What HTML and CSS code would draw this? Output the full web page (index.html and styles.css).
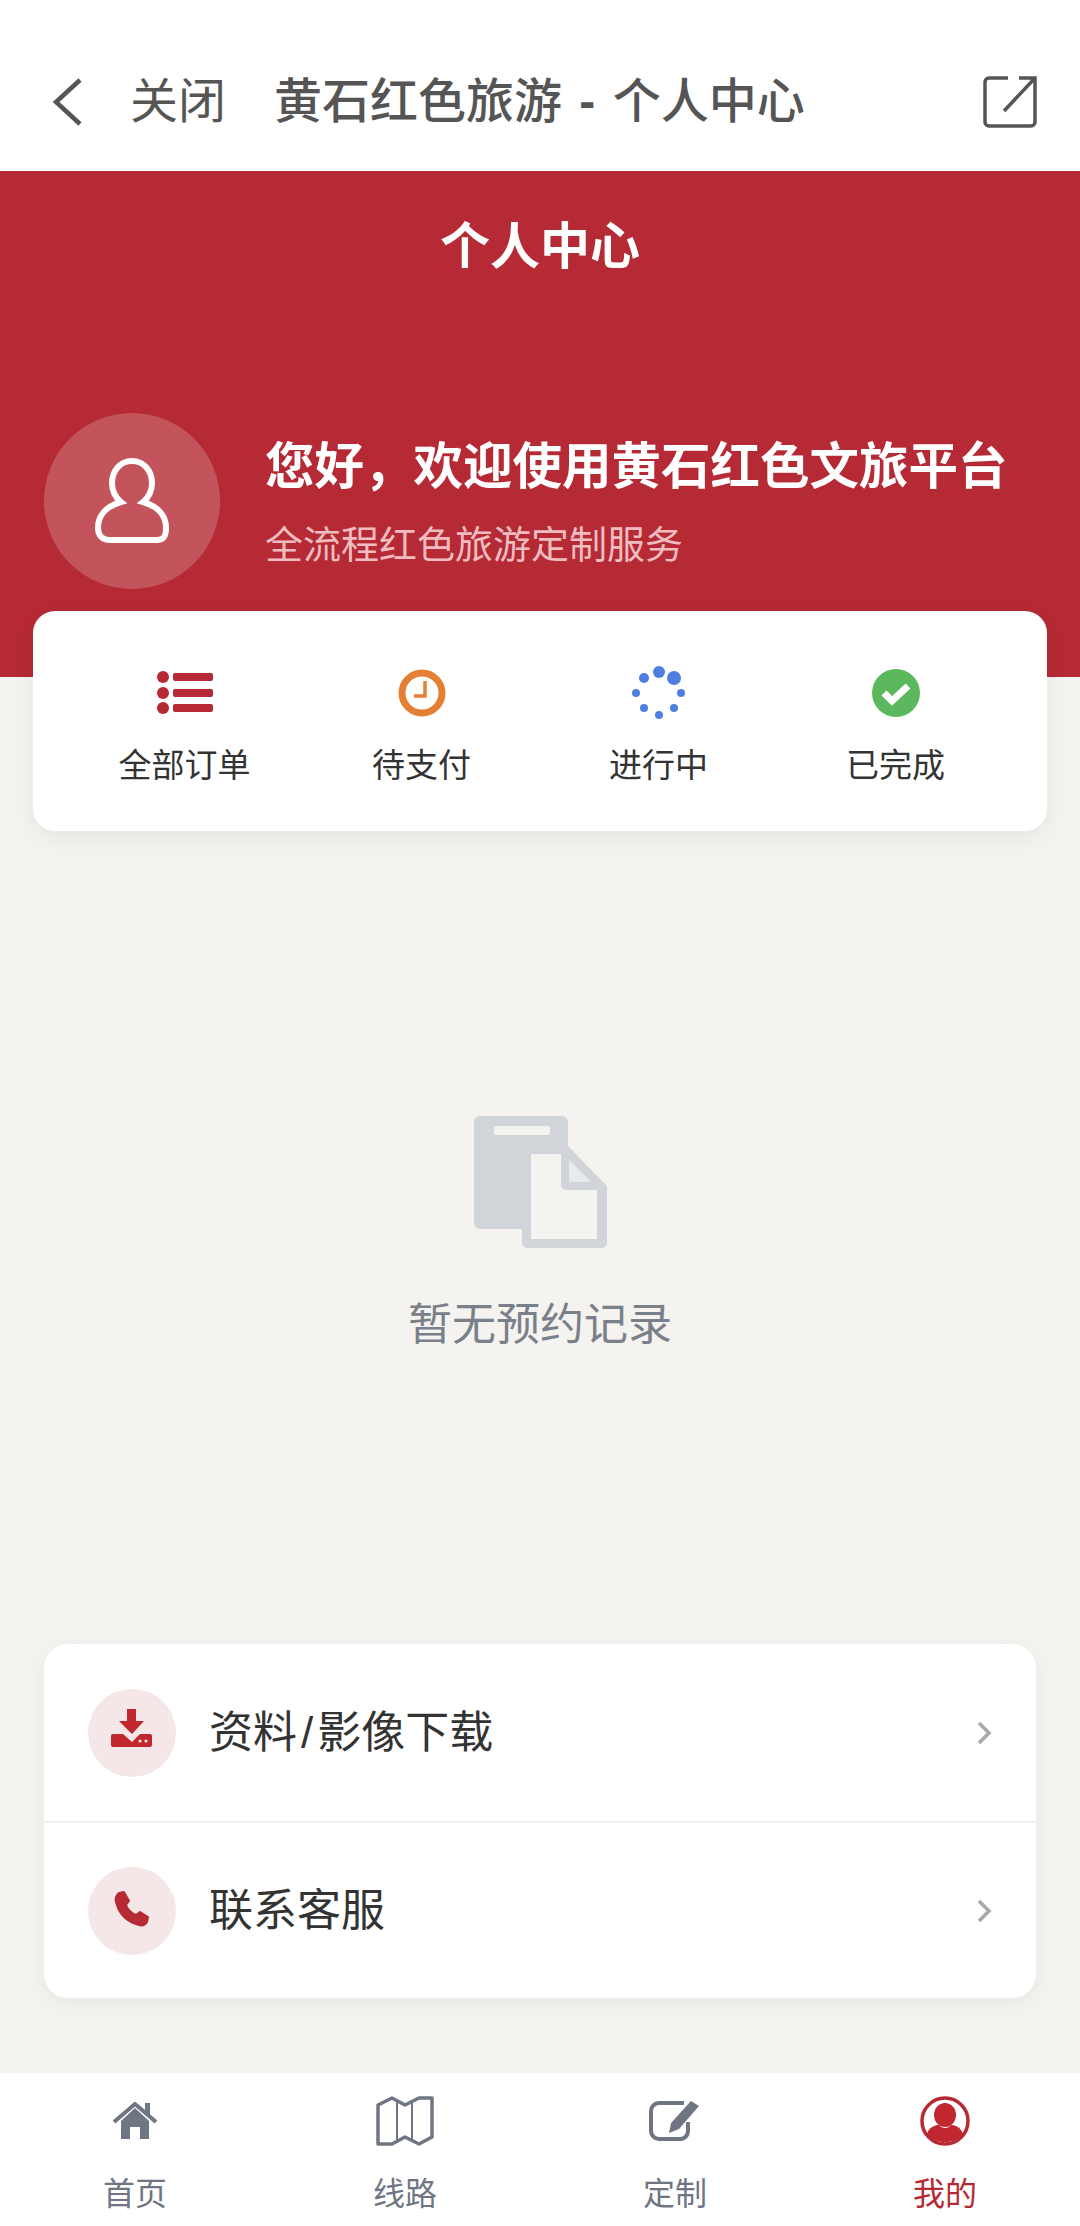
FILE: index.html
```html
<!DOCTYPE html>
<html lang="zh-CN">
<head>
  <meta charset="UTF-8" />
  <meta name="viewport" content="width=device-width, initial-scale=1.0" />
  <title>黄石红色旅游 - 个人中心</title>
  <link rel="stylesheet" href="styles.css">
</head>
<body>
  <div class="page">
    <header class="topbar">
      <svg class="back-icon" width="32" height="48" viewBox="0 0 32 48"><path d="M29 2 L5 24 L29 46" /></svg>
      <span class="close-text">关闭</span>
      <span class="top-title">黄石红色旅游 <b class="dash">-</b> 个人中心</span>
      <svg class="open-icon" width="56" height="54" viewBox="0 0 56 54"><path d="M26 3 H7 a4 4 0 0 0 -4 4 V47 a4 4 0 0 0 4 4 H49 a4 4 0 0 0 4 -4 V3 H37 M53 3 L22 36" /></svg>
    </header>

    <section class="hero">
      <h1 class="hero-title">个人中心</h1>
      <div class="user-row">
        <div class="avatar">
          <svg width="74" height="86" viewBox="0 0 74 86"><path d="M37 3 c-12 0 -20 10 -20 22 c0 8 4 15 9 19 c-14 4 -23 13 -23 26 c0 8 5 12 12 12 H62 c7 0 9 -4 9 -12 c0 -13 -9 -22 -23 -26 c5 -4 9 -11 9 -19 c0 -12 -8 -22 -20 -22 z" /></svg>
        </div>
        <div class="user-text">
          <div class="hello">您好&#xFF0C;欢迎使用黄石红色文旅平台</div>
          <div class="hello-sub">全流程红色旅游定制服务</div>
        </div>
      </div>
    </section>

    <main class="content">
      <nav class="orders">
        <div class="order-item">
          <svg width="56" height="56" viewBox="0 0 56 56">
            <g fill="#b52a34">
              <circle cx="6" cy="12" r="6" /><circle cx="6" cy="28" r="6" /><circle cx="6" cy="43" r="6" />
              <rect x="16" y="8" width="40" height="8" rx="2" /><rect x="16" y="24" width="40" height="8" rx="2" /><rect x="16" y="39" width="40" height="8" rx="2" />
            </g>
          </svg>
          <span>全部订单</span>
        </div>
        <div class="order-item">
          <svg width="48" height="56" viewBox="0 0 48 56">
            <circle cx="24" cy="28" r="20" fill="none" stroke="#e47f33" stroke-width="7" />
            <path d="M27 16 V31 H16" fill="none" stroke="#e47f33" stroke-width="3.5" />
          </svg>
          <span>待支付</span>
        </div>
        <div class="order-item">
          <svg width="56" height="56" viewBox="0 0 56 56">
            <g fill="#4e7fe0">
              <circle cx="28" cy="7" r="6" /><circle cx="43" cy="13" r="7" /><circle cx="13" cy="13" r="5" />
              <circle cx="5" cy="28" r="4" /><circle cx="50" cy="28" r="4" />
              <circle cx="13" cy="43" r="4" /><circle cx="43" cy="43" r="4" /><circle cx="28" cy="50" r="4" />
            </g>
          </svg>
          <span>进行中</span>
        </div>
        <div class="order-item">
          <svg width="48" height="56" viewBox="0 0 48 56">
            <circle cx="24" cy="28" r="24" fill="#5cb85c" />
            <path d="M12 28 L20 36 L36 21" fill="none" stroke="#fff" stroke-width="7" />
          </svg>
          <span>已完成</span>
        </div>
      </nav>

      <div class="empty">
        <svg width="133" height="133" viewBox="0 0 133 133">
          <path fill="#d1d4d9" d="M6 0 H88 a6 6 0 0 1 6 6 V30 L133 70 V127 a5 5 0 0 1 -5 5 H53 a5 5 0 0 1 -5 -5 V113 H6 a6 6 0 0 1 -6 -6 V6 a6 6 0 0 1 6 -6 z" />
          <path fill="#f4f3ef" d="M57 38 H87 V69 a5 5 0 0 0 5 5 H123 V123 H57 z" />
          <path fill="#e8eaed" d="M95 44 L117 66 H95 z" />
          <rect x="20" y="10" width="56" height="9" rx="2" fill="#f4f3ef" />
        </svg>
        <p class="empty-text">暂无预约记录</p>
      </div>

      <div class="menu">
        <div class="menu-row">
          <div class="menu-badge">
            <svg width="88" height="88" viewBox="0 0 88 88">
              <path fill="#c0272f" d="M39 20 H48 V32 H56 L44 45 L31 32 H39 z" />
              <path fill="#c0272f" d="M25 45 H35 L44 53 L52 45 H62 a2 2 0 0 1 2 2 V56 a2 2 0 0 1 -2 2 H25 a2 2 0 0 1 -2 -2 V47 a2 2 0 0 1 2 -2 z" />
              <circle cx="52" cy="52" r="1.6" fill="#f5e6e6" /><circle cx="58" cy="52" r="1.6" fill="#f5e6e6" />
            </svg>
          </div>
          <span class="menu-text">资料<span class="slash">/</span>影像下载</span>
          <svg class="chevron" width="16" height="26" viewBox="0 0 16 26"><path d="M3 3 L13 13 L3 23" /></svg>
        </div>
        <div class="menu-row">
          <div class="menu-badge">
            <svg width="88" height="88" viewBox="0 0 88 88">
              <path fill="#b52a34" stroke="#b52a34" stroke-width="2" stroke-linejoin="round" d="M31 26 l5 -1 l5 9 l-3 4 c2 5 5 8 10 10 l4 -3 l8 5 l-1 5 c-2 3 -5 4 -8 3 c-12 -3 -20 -11 -23 -23 c-1 -3 0 -7 3 -9 z" />
            </svg>
          </div>
          <span class="menu-text">联系客服</span>
          <svg class="chevron" width="16" height="26" viewBox="0 0 16 26"><path d="M3 3 L13 13 L3 23" /></svg>
        </div>
      </div>
    </main>

    <footer class="tabbar">
      <div class="tab">
        <div class="tab-icon">
          <svg width="46" height="38" viewBox="0 0 46 38">
            <path fill="#6f7583" d="M9 19 L23 6 L37 19 V37 H28 V25 H18 V37 H9 z" />
            <path fill="none" stroke="#6f7583" stroke-width="4" d="M2 20 L23 2 L44 20" />
            <rect x="33" y="1" width="5" height="12" fill="#6f7583" />
          </svg>
        </div>
        <span>首页</span>
      </div>
      <div class="tab">
        <div class="tab-icon">
          <svg width="58" height="50" viewBox="0 0 58 50">
            <path fill="none" stroke="#6f7583" stroke-width="3.5" stroke-linejoin="round" d="M2 9 L16 2 L29 9 L43 2 L56 2 V41 L43 48 L29 41 L16 48 L2 48 z" />
            <path fill="none" stroke="#6f7583" stroke-width="2" d="M21 6 V44 M36 6 V44" />
          </svg>
        </div>
        <span>线路</span>
      </div>
      <div class="tab">
        <div class="tab-icon">
          <svg width="52" height="42" viewBox="0 0 52 42">
            <path fill="none" stroke="#6f7583" stroke-width="4" d="M35 3 H10 a8 8 0 0 0 -8 8 V31 a8 8 0 0 0 8 8 H32 a8 8 0 0 0 7 -8 V22" />
            <path fill="#6f7583" d="M42 1 L50 6 L30 29 L20 33 L22 23 z" />
          </svg>
        </div>
        <span>定制</span>
      </div>
      <div class="tab tab-active">
        <div class="tab-icon">
          <svg width="50" height="50" viewBox="0 0 50 50">
            <circle cx="25" cy="25" r="23" fill="none" stroke="#b52a34" stroke-width="3.5" />
            <ellipse cx="25" cy="19" rx="11" ry="12" fill="#c0272f" />
            <path fill="#c0272f" d="M7 38 C9 31 15 29 19 29 C22 33 28 33 31 29 C35 29 41 31 43 38 C38 44 32 46 25 46 C18 46 12 44 7 38 z" />
          </svg>
        </div>
        <span>我的</span>
      </div>
    </footer>
  </div>
</body>
</html>
```

FILE: styles.css
```css
* {
  box-sizing: border-box;
}
body {
  margin: 0;
  font-family: "Liberation Sans", "Noto Sans CJK SC", sans-serif;
  background: #f4f3ef;
}
.page {
  display: flex;
  flex-direction: column;
  height: 2226px;
}
.topbar {
  display: flex;
  align-items: center;
  height: 171px;
  padding: 33px 42px 0 51px;
  background: #fff;
  color: #555;
}
.back-icon path,
.open-icon path {
  fill: none;
  stroke: #555;
  stroke-width: 4.5;
}
.open-icon path {
  stroke-width: 3.5;
}
.close-text {
  margin-left: 47px;
  font-size: 48px;
  line-height: 60px;
}
.top-title {
  flex: 1;
  margin-left: 48px;
  font-size: 48px;
  line-height: 60px;
  font-weight: 500;
}
.dash {
  margin: 0 4px;
}
.hero {
  height: 506px;
  padding-top: 46px;
  background: #b52a34;
  color: #fff;
}
.hero-title {
  margin: 0;
  text-align: center;
  font-size: 50px;
  line-height: 60px;
  font-weight: 700;
}
.user-row {
  display: flex;
  align-items: center;
  gap: 45px;
  margin-top: 136px;
  padding-left: 44px;
}
.avatar {
  display: flex;
  align-items: center;
  justify-content: center;
  width: 176px;
  height: 176px;
  border-radius: 50%;
  background: rgba(255, 255, 255, 0.2);
}
.avatar path {
  fill: none;
  stroke: #fff;
  stroke-width: 6;
}
.user-text {
  padding-top: 4px;
}
.hello {
  font-size: 49.5px;
  line-height: 60px;
  font-weight: 700;
  white-space: nowrap;
}
.hello-sub {
  margin-top: 23px;
  font-size: 38px;
  line-height: 50px;
  color: #f0bcc0;
}
.content {
  flex: 1;
  display: flex;
  flex-direction: column;
}
.orders {
  display: grid;
  grid-template-columns: repeat(4, 1fr);
  height: 220px;
  margin: -66px 33px 0;
  padding: 54px 33px 0;
  border-radius: 22px;
  background: #fff;
  box-shadow: 0 8px 24px rgba(0, 0, 0, 0.06);
}
.order-item {
  display: flex;
  flex-direction: column;
  align-items: center;
  font-size: 33px;
  line-height: 44px;
  color: #333;
}
.order-item svg {
  margin-bottom: 23px;
}
.empty {
  display: flex;
  flex-direction: column;
  align-items: center;
  padding-top: 285px;
}
.empty-text {
  margin: 46px 0 0;
  font-size: 44px;
  line-height: 60px;
  color: #7a808a;
}
.menu {
  margin: auto 44px 75px;
  border-radius: 24px;
  background: #fff;
  box-shadow: 0 6px 24px rgba(0, 0, 0, 0.05);
}
.menu-row {
  display: flex;
  align-items: center;
  height: 177px;
  padding: 0 44px;
}
.menu-row + .menu-row {
  border-top: 2px solid #f1f1f0;
}
.menu-badge {
  width: 88px;
  height: 88px;
  border-radius: 50%;
  background: #f5e6e7;
}
.menu-text {
  flex: 1;
  margin-left: 33px;
  font-size: 44px;
  line-height: 60px;
  color: #333;
}
.slash {
  margin: 0 4px;
}
.chevron path {
  fill: none;
  stroke: #a5a8ad;
  stroke-width: 3.5;
}
.tabbar {
  display: grid;
  grid-template-columns: repeat(4, 1fr);
  height: 153px;
  padding: 22px 0 0;
  background: #fff;
}
.tab {
  display: flex;
  flex-direction: column;
  align-items: center;
  font-size: 32px;
  line-height: 44px;
  color: #6f7583;
}
.tab-icon {
  display: flex;
  align-items: center;
  justify-content: center;
  height: 52px;
  margin-bottom: 25px;
}
.tab-active {
  color: #b52a34;
}
```
